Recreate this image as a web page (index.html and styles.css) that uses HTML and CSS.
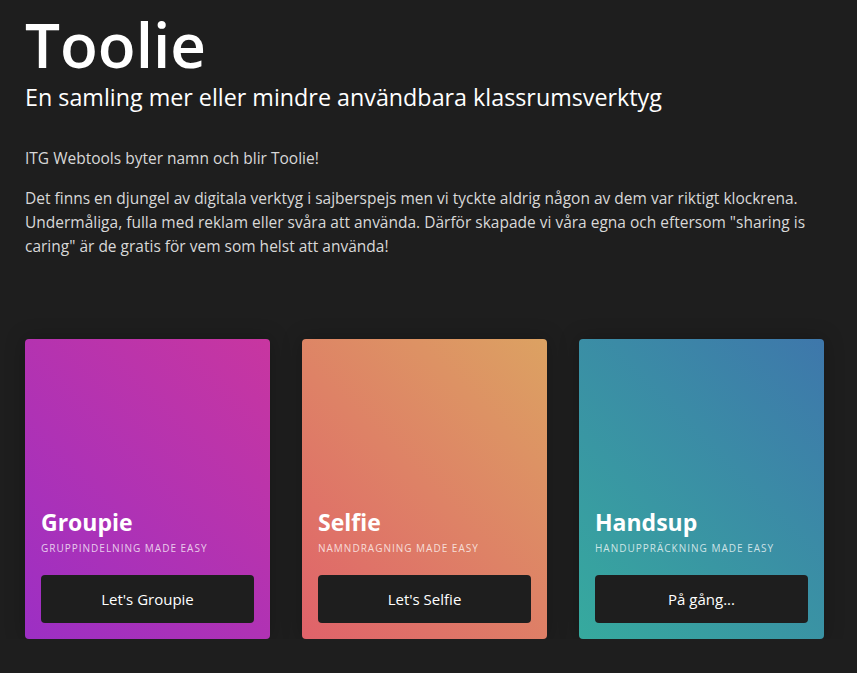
FILE: index.html
```html
<!DOCTYPE html>
<html lang="sv">
<head>
  <meta charset="UTF-8" />
  <meta name="viewport" content="width=device-width, initial-scale=1.0"/>
  <title>Toolie</title>
  <link rel="stylesheet" href="styles.css">
</head>
<body>
  <div class="page">
    <header class="header">
      <h1>Toolie</h1>
      <p class="tagline">En samling mer eller mindre användbara klassrumsverktyg</p>
    </header>

    <div class="intro">
      <p>ITG Webtools byter namn och blir Toolie!</p>
      <p>Det finns en djungel av digitala verktyg i sajberspejs men vi tyckte aldrig någon av dem var riktigt klockrena. Undermåliga, fulla med reklam eller svåra att använda. Därför skapade vi våra egna och eftersom "sharing is caring" är de gratis för vem som helst att använda!</p>
    </div>

    <div class="tools">
      <div class="tool tool-groupie">
        <h3>Groupie</h3>
        <p class="tool-sub">Gruppindelning made easy</p>
        <a href="#" class="tool-btn">Let's Groupie</a>
      </div>
      <div class="tool tool-selfie">
        <h3>Selfie</h3>
        <p class="tool-sub">Namndragning made easy</p>
        <a href="#" class="tool-btn">Let's Selfie</a>
      </div>
      <div class="tool tool-handsup">
        <h3>Handsup</h3>
        <p class="tool-sub">Handuppräckning made easy</p>
        <a href="#" class="tool-btn">På gång...</a>
      </div>
    </div>
  </div>
</body>
</html>
```

FILE: styles.css
```css
* {
  margin: 0;
  padding: 0;
  box-sizing: border-box;
  font-family: 'Open Sans', 'Noto Sans', sans-serif;
}

body {
  background-color: #1e1e1e;
  color: #d8d8d8;
}

.page {
  padding: 0 25px;
}

.header {
  padding-top: 6px;
}

.header h1 {
  font-size: 62px;
  line-height: 76px;
  font-weight: 600;
  color: #fff;
}

.tagline {
  font-size: 23.3px;
  line-height: 30px;
  color: #fff;
}

.intro {
  margin-top: 34px;
  width: 808px;
}

.intro p {
  font-size: 15.5px;
  line-height: 24px;
  margin-bottom: 16px;
}

.tools {
  display: grid;
  grid-template-columns: repeat(3, 245px);
  gap: 32px;
  margin-top: 81px;
}

.tool {
  height: 300px;
  border-radius: 4px;
  padding: 16px;
  display: flex;
  flex-direction: column;
  justify-content: flex-end;
  box-shadow: 0 0 20px rgba(0, 0, 0, 0.25);
}

.tool-groupie {
  background: linear-gradient(45deg, #9c2fc4, #c836a0);
}

.tool-selfie {
  background: linear-gradient(45deg, #e0626a, #dca262);
}

.tool-handsup {
  background: linear-gradient(45deg, #36aa9e, #3e77ab);
}

.tool h3 {
  font-size: 23px;
  line-height: 30px;
  font-weight: 700;
  color: #fff;
}

.tool-sub {
  font-size: 10px;
  letter-spacing: 1px;
  text-transform: uppercase;
  color: rgba(255, 255, 255, 0.75);
  margin-top: 4px;
  margin-bottom: 20px;
}

.tool-btn {
  display: block;
  height: 48px;
  line-height: 48px;
  text-align: center;
  background-color: #1e1e1e;
  border-radius: 4px;
  color: #fff;
  font-size: 15px;
  text-decoration: none;
}
```
